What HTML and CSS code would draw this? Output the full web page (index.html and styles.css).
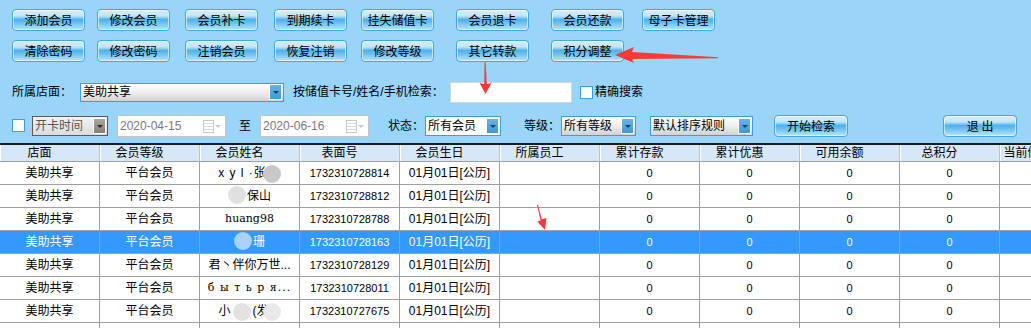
FILE: index.html
```html
<!DOCTYPE html>
<html lang="zh-CN">

<head>
  <meta charset="UTF-8" />
  <title>会员管理</title>
  <link rel="stylesheet" href="styles.css">
</head>

<body>
  <div class="toolbar">
    <button class="btn">添加会员</button>
    <button class="btn">修改会员</button>
    <button class="btn">会员补卡</button>
    <button class="btn">到期续卡</button>
    <button class="btn">挂失储值卡</button>
    <button class="btn">会员退卡</button>
    <button class="btn">会员还款</button>
    <button class="btn">母子卡管理</button>
    <button class="btn">清除密码</button>
    <button class="btn">修改密码</button>
    <button class="btn">注销会员</button>
    <button class="btn">恢复注销</button>
    <button class="btn">修改等级</button>
    <button class="btn">其它转款</button>
    <button class="btn">积分调整</button>
  </div>

  <div class="row search">
    <span class="lbl">所属店面：</span>
    <div class="combo shop"><span>美助共享</span><i class="drop"></i></div>
    <span class="lbl keyword">按储值卡号/姓名/手机检索：</span>
    <input class="kw" type="text">
    <span class="chk exact"></span>
    <span class="lbl chk-text">精确搜索</span>
  </div>

  <div class="row filter">
    <span class="chk"></span>
    <div class="combo grey opendate"><span>开卡时间</span><i class="drop"></i></div>
    <div class="date first"><span>2020-04-15</span><i class="cal"></i></div>
    <span class="lbl to">至</span>
    <div class="date"><span>2020-06-16</span><i class="cal"></i></div>
    <span class="lbl state">状态：</span>
    <div class="combo plain status"><span>所有会员</span><i class="drop"></i></div>
    <span class="lbl level">等级：</span>
    <div class="combo levels"><span>所有等级</span><i class="drop"></i></div>
    <div class="combo sort"><span>默认排序规则</span><i class="drop"></i></div>
    <button class="btn start">开始检索</button>
    <button class="btn quit">退 出</button>
  </div>

  <table class="grid">
    <colgroup>
      <col><col><col><col><col><col><col><col><col><col><col>
    </colgroup>
    <thead>
      <tr>
        <th>店面</th>
        <th>会员等级</th>
        <th>会员姓名</th>
        <th>表面号</th>
        <th>会员生日</th>
        <th>所属员工</th>
        <th>累计存款</th>
        <th>累计优惠</th>
        <th>可用余额</th>
        <th>总积分</th>
        <th>当前储值余额</th>
      </tr>
    </thead>
    <tbody>
      <tr>
        <td>美助共享</td><td>平台会员</td>
        <td><span class="sp">x y l ·张</span><span class="blur b1"></span></td>
        <td class="num">1732310728814</td><td>01月01日[公历]</td><td></td>
        <td class="num">0</td><td class="num">0</td><td class="num">0</td><td class="num">0</td><td></td>
      </tr>
      <tr>
        <td>美助共享</td><td>平台会员</td>
        <td><span class="blur b2"></span>保山</td>
        <td class="num">1732310728812</td><td>01月01日[公历]</td><td></td>
        <td class="num">0</td><td class="num">0</td><td class="num">0</td><td class="num">0</td><td></td>
      </tr>
      <tr>
        <td>美助共享</td><td>平台会员</td>
        <td class="latin">huang98</td>
        <td class="num">1732310728788</td><td>01月01日[公历]</td><td></td>
        <td class="num">0</td><td class="num">0</td><td class="num">0</td><td class="num">0</td><td></td>
      </tr>
      <tr class="selected">
        <td>美助共享</td><td>平台会员</td>
        <td><span class="blur b2 light"></span>珊</td>
        <td class="num">1732310728163</td><td>01月01日[公历]</td><td></td>
        <td class="num">0</td><td class="num">0</td><td class="num">0</td><td class="num">0</td><td></td>
      </tr>
      <tr>
        <td>美助共享</td><td>平台会员</td>
        <td>君丶伴你万世...</td>
        <td class="num">1732310728129</td><td>01月01日[公历]</td><td></td>
        <td class="num">0</td><td class="num">0</td><td class="num">0</td><td class="num">0</td><td></td>
      </tr>
      <tr>
        <td>美助共享</td><td>平台会员</td>
        <td class="latin sp">б ы т ь р я...</td>
        <td class="num">1732310728011</td><td>01月01日[公历]</td><td></td>
        <td class="num">0</td><td class="num">0</td><td class="num">0</td><td class="num">0</td><td></td>
      </tr>
      <tr>
        <td>美助共享</td><td>平台会员</td>
        <td>小<span class="blur b3"></span>(发<span class="blur b4"></span></td>
        <td class="num">1732310727675</td><td>01月01日[公历]</td><td></td>
        <td class="num">0</td><td class="num">0</td><td class="num">0</td><td class="num">0</td><td></td>
      </tr>
      <tr>
        <td></td><td></td><td></td><td></td><td></td><td></td>
        <td></td><td></td><td></td><td></td><td></td>
      </tr>
    </tbody>
  </table>

  <!-- flechas rojas de anotación -->
  <svg class="marks" width="1031" height="328" viewBox="0 0 1031 328">
    <path d="M615 55 L634 47 L632 52 L718 57.3 L718 58.3 L632 59 L634 63 Z" fill="#f53a3a" />
    <path d="M484.6 62 L485.6 62 L486.8 84 L491.5 83 L485.5 94 L479.5 83 L484.2 84 Z" fill="#f53a3a" />
    <path d="M537 205 L538 205 L541.8 219.3 L546.5 218 L545 230 L537.3 221.6 L540.6 220.5 Z" fill="#f53a3a" />
  </svg>
</body>

</html>
```

FILE: styles.css
```css
* {
  margin: 0px;
  padding: 0px;
  box-sizing: border-box;
}

html,
body {
  overflow: hidden;
}

body {
  position: relative;
  width: 1031px;
  height: 328px;
  background-color: #98d5f9;
  font-family: "Liberation Sans", "Noto Sans CJK SC", sans-serif;
  font-size: 12px;
  line-height: 16px;
  color: #000;
}

/* botones */
.toolbar {
  display: grid;
  grid-template-columns: 85px 88px 89px 87px 95px 95px 91px 73px;
  row-gap: 9px;
  padding: 9px 0 0 12px;
}

.btn {
  width: 73px;
  height: 22px;
  border: 1px solid #47a4e4;
  border-radius: 4px;
  background: linear-gradient(#d4eefc 0%, #bfe5fa 30%, #4fb1ea 48%, #6fc1ef 65%, #b9e4fa 100%);
  box-shadow: inset 0 0 0 1px rgba(255, 255, 255, 0.55);
  font-family: "Noto Sans CJK SC", sans-serif;
  font-size: 12px;
  line-height: 18px;
  color: #000;
  cursor: pointer;
}

.row {
  display: flex;
  align-items: center;
  padding-left: 12px;
}

.lbl {
  white-space: nowrap;
}

.search {
  margin-top: 19px;
  height: 22px;
}

.filter {
  margin-top: 11px;
  height: 23px;
}

/* combos */
.combo {
  display: flex;
  align-items: center;
  justify-content: space-between;
  height: 20px;
  border: 1px solid #3d9de0;
  background: linear-gradient(#ffffff 0%, #eeeeee 50%, #d2d2d2 100%);
  padding: 0 1px 0 2px;
  font-size: 12px;
}

.combo span {
  white-space: nowrap;
  overflow: hidden;
}

.drop {
  display: block;
  position: relative;
  width: 13px;
  height: 16px;
  border: 1px solid #fff;
  background: linear-gradient(#67b4e6, #3f98d6);
  flex-shrink: 0;
}

.drop::after {
  content: "";
  position: absolute;
  left: 3px;
  top: 6px;
  border-left: 3px solid transparent;
  border-right: 3px solid transparent;
  border-top: 3px solid #1b3f60;
}

.shop {
  width: 204px;
  margin-left: 8px;
  height: 19px;
}

.keyword {
  width: 157px;
  margin-left: 9px;
}

.kw {
  width: 122px;
  height: 21px;
  border: 1px solid #d0d8e0;
  background: #fff;
  outline: none;
}

.chk {
  display: block;
  width: 13px;
  height: 13px;
  border: 1px solid #3d9de0;
  background: #fff;
  flex-shrink: 0;
}

.exact {
  margin-left: 8px;
}

.chk-text {
  margin-left: 2px;
}

.grey {
  border-color: #5a5a5a;
  background: linear-gradient(#f2f2f2, #dcdcdc);
  color: #555;
}

.grey .drop {
  background: linear-gradient(#aaa6a0, #847f78);
}

.grey .drop::after {
  border-top-color: #2a2a2a;
}

.opendate {
  width: 76px;
  margin-left: 7px;
}

.plain {
  background: #fff;
}

.status {
  width: 76px;
  margin-left: 1px;
}

.levels {
  width: 75px;
  margin-left: 1px;
}

.sort {
  width: 103px;
  margin-left: 14px;
}

/* fechas */
.date {
  display: flex;
  align-items: center;
  justify-content: space-between;
  width: 109px;
  height: 22px;
  border: 1px solid #c4c4c4;
  background: #fff;
  padding: 0 4px 0 2px;
  color: #7a7a7a;
}

.date.first {
  margin-left: 9px;
}

.cal {
  display: block;
  position: relative;
  width: 18px;
  height: 12px;
}

.cal::before {
  content: "";
  position: absolute;
  left: 0;
  top: 0;
  width: 9px;
  height: 11px;
  border: 1px solid #c8c8c8;
  background: repeating-linear-gradient(#fff 0 2px, #dcdcdc 2px 3px);
}

.cal::after {
  content: "";
  position: absolute;
  left: 12px;
  top: 5px;
  border-left: 3px solid transparent;
  border-right: 3px solid transparent;
  border-top: 3px solid #c8c8c8;
}

.to {
  margin-left: 13px;
  margin-right: 9px;
}

.state {
  margin-left: 19px;
}

.level {
  margin-left: 23px;
}

.start {
  margin-left: 21px;
  width: 74px;
}

.quit {
  margin-left: 95px;
  width: 74px;
}

/* tabla */
.grid {
  margin-top: 6px;
  width: 1100px;
  table-layout: fixed;
  border-collapse: separate;
  border-spacing: 0;
  border-top: 2px solid #1c1c1c;
}

.grid col {
  width: 100px;
}

th,
td {
  border-right: 1px solid #a0a0a0;
  border-bottom: 1px solid #a0a0a0;
  text-align: center;
  white-space: nowrap;
  overflow: hidden;
  font-weight: normal;
}

th {
  height: 17px;
  background-color: #d6e8f8;
  padding-right: 20px;
  line-height: 15px;
  border-right-color: #b4c4d2;
  box-shadow: inset 1px 0 0 #fff;
}

td {
  height: 23px;
  background-color: #fff;
  line-height: 22px;
}

td.num {
  font-size: 11px;
}

td.latin {
  font-family: "DejaVu Serif", "Liberation Serif", serif;
  font-size: 11px;
}

.sp {
  letter-spacing: 1px;
}

.selected td {
  background-color: #3399ff;
  color: #fff;
}

.blur {
  display: inline-block;
  width: 18px;
  height: 18px;
  border-radius: 50%;
  background: #d8d8d8;
  vertical-align: middle;
}

.b1 {
  margin-left: -4px;
  background: #c8c8c8;
}

.b2 {
  margin-right: 1px;
  margin-top: -4px;
  background: #e0e0e0;
}

.b2.light {
  background: #a9d2fd;
}

.b3 {
  margin: 0 2px;
  background: #e2e2e2;
}

.b4 {
  margin-left: -6px;
  background: #e8e8e8;
}

.marks {
  position: absolute;
  left: 0;
  top: 0;
  pointer-events: none;
}
```
